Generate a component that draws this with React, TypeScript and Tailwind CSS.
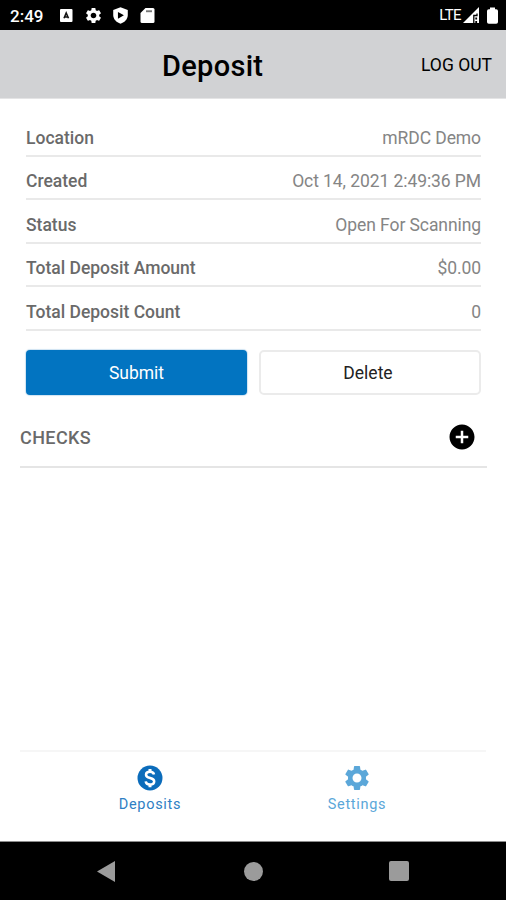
import type { ReactNode } from 'react'
import { MdAddCircle, MdSettings } from 'react-icons/md'

const details = [
  { label: 'Location', value: 'mRDC Demo' },
  { label: 'Created', value: 'Oct 14, 2021 2:49:36 PM' },
  { label: 'Status', value: 'Open For Scanning' },
  { label: 'Total Deposit Amount', value: '$0.00' },
  { label: 'Total Deposit Count', value: '0' },
]

function StatusBar() {
  return (
    <div className="flex h-[30px] shrink-0 items-center bg-black pl-[10px] pr-[8px] text-white">
      <span className="w-[49px] pt-[2px] text-[17px] font-medium leading-none">2:49</span>
      <div className="flex items-center">
        <svg className="h-[15px] w-[15px]" viewBox="0 0 15 15">
          <rect x="1" y="1" width="12.5" height="13" rx="1" fill="#fff" />
          <path d="M5 10.2 7.2 5l2.3 5.2M6 9h2.600" fill="none" stroke="#111" strokeWidth="1.6" />
        </svg>
        <MdSettings className="ml-[10px] h-[19px] w-[19px]" />
        <svg className="ml-[8px] h-[19px] w-[19px]" viewBox="0 0 24 24">
          <path d="M12 1.5 2.8 5v6.5c0 5 3.8 9.3 9.2 11 5.4-1.7 9.2-6 9.2-11V5z" fill="#fff" />
          <path d="M8.8 7.5v8.5l7.5-4.2z" fill="#000" />
        </svg>
        <svg className="ml-[10px] h-[17px] w-[15px]" viewBox="0 0 15 17">
          <path d="M5.5 1H13q1.500 0 1.500 1.500v12q0 1.500-1.500 1.500H2Q.5 16 .5 14.500V6z" fill="#fff" />
          <path d="M6 3.300h6v1.900H6z" fill="#777" />
        </svg>
      </div>
      <span className="ml-auto pt-px text-[15px] leading-none tracking-[-0.6px]">LTE</span>
      <svg className="ml-[2px] h-[16px] w-[17px]" viewBox="0 0 17 16">
        <path d="M16 0v16H0z" fill="#fff" />
        <path d="M10.800 16V8.500H14V6.500" fill="none" stroke="#000" strokeWidth="1.300" />
        <path d="M13.200 10.500v2M13.200 14v2" stroke="#000" strokeWidth="1.800" />
      </svg>
      <svg className="ml-[7px] h-[17px] w-[11px]" viewBox="0 0 11 17">
        <path d="M3 .5h5v1.800h1.200q1.800 0 1.800 1.800v11q0 1.700-1.800 1.700H1.800Q0 16.800 0 15.100v-11q0-1.800 1.800-1.800H3z" fill="#fff" />
      </svg>
    </div>
  )
}

function DollarIcon() {
  return (
    <svg className="h-[30px] w-[30px]" viewBox="0 0 30 30" fill="none">
      <circle cx="15" cy="15" r="12.5" fill="#0b6cbb" />
      <path
        d="M19 11.500c-.400-1.800-1.800-2.700-4-2.700-2.500 0-4 1.200-4 2.900 0 4.300 8.200 2.400 8.200 6.700 0 1.900-1.700 3-4.200 3-2.500 0-4.100-1.100-4.300-3.100"
        stroke="#fff"
        strokeWidth="2.500"
      />
      <path d="M15 6v3M15 21v3.300" stroke="#fff" strokeWidth="3" />
    </svg>
  )
}

function TabItem({ icon, label, className }: { icon: ReactNode; label: string; className: string }) {
  return (
    <div className={`flex w-[207px] flex-col items-center ${className}`}>
      {icon}
      <span className="mt-[3px] pl-px text-[14.5px] leading-[18px] tracking-[0.7px]">{label}</span>
    </div>
  )
}

export default function App() {
  return (
    <div className="flex h-[900px] w-[506px] flex-col overflow-hidden bg-white font-['Roboto',sans-serif]">
      <StatusBar />

      {/* Header */}
      <header className="flex h-[69px] shrink-0 items-center justify-between border-b border-[#e4e4e5] bg-[#d1d2d4] pl-[162px] pr-[14px] text-black">
        <h1 className="pt-[4px] text-[29px] font-medium leading-none tracking-[0.3px]">Deposit</h1>
        <span className="whitespace-nowrap pt-[2px] text-[17.5px]">LOG OUT</span>
      </header>

      {/* Deposit details */}
      <main className="flex flex-1 flex-col">
        <dl className="ml-[26px] mr-[25px] mt-[14px]">
          {details.map((row) => (
            <div
              key={row.label}
              className="flex h-[43.6px] items-center justify-between border-b-2 border-[#e9e9e9] pt-[9px] text-[17.5px] leading-none"
            >
              <dt className="font-medium text-[#6a6a6a]">{row.label}</dt>
              <dd className="tracking-[-0.08px] text-[#858585]">{row.value}</dd>
            </div>
          ))}
        </dl>

        <div className="mx-[26px] mt-[19px] grid grid-cols-[221px_222px] gap-[12px] text-[17.5px]">
          <button className="h-[45px] rounded-[4px] bg-[#0274c1] pt-[2px] text-white shadow-[0_0_1px_1px_#cfe3f2]">
            Submit
          </button>
          <button className="h-[45px] rounded-[5px] border-2 border-[#ebebeb] pr-[4px] pt-[2px] text-[#222]">
            Delete
          </button>
        </div>

        {/* Checks */}
        <div className="ml-[20px] mr-[19px] mt-[13px] flex h-[60px] items-center justify-between border-b-2 border-[#e5e5e5] pr-[10px]">
          <h2 className="pt-[2px] text-[18px] font-medium tracking-[0.4px] text-[#6a6a6a]">CHECKS</h2>
          <MdAddCircle className="h-[30px] w-[30px] text-black" />
        </div>
      </main>

      {/* Tabs */}
      <nav className="mx-[20px] flex h-[91px] shrink-0 justify-center border-t-2 border-[#f6f6f6] pt-[11px]">
        <TabItem className="text-[#2f7fc4]" icon={<DollarIcon />} label="Deposits" />
        <TabItem
          className="text-[#5ba7d9]"
          icon={<MdSettings className="h-[30px] w-[30px]" />}
          label="Settings"
        />
      </nav>

      {/* Android navigation */}
      <div className="flex h-[59px] shrink-0 items-center border-t border-[#8c8c8c] bg-black pl-[97px] text-[#9b9b9b]">
        <svg className="h-[21px] w-[18px]" viewBox="0 0 18 22" fill="currentColor" preserveAspectRatio="none">
          <path d="M18 0v22L0 11z" />
        </svg>
        <div className="ml-[129px] h-[19px] w-[19px] rounded-full bg-[#9b9b9b]" />
        <div className="ml-[126px] h-[20px] w-[20px] rounded-[2px] bg-[#9b9b9b]" />
      </div>
    </div>
  )
}
